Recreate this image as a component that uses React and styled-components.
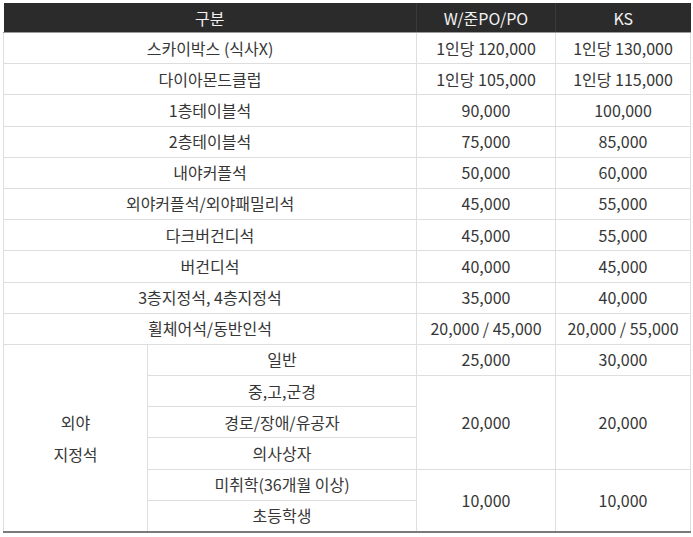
import styled, { createGlobalStyle } from 'styled-components';

const GlobalStyle = createGlobalStyle`
  body {
    margin: 0;
    background: #fff;
    font-family: "Noto Sans CJK KR", "Noto Sans", sans-serif;
  }
`;

const Wrap = styled.div`
  padding: 3px 3px 0 3px;
`;

const Table = styled.table`
  width: 687px;
  border-collapse: collapse;
  table-layout: fixed;
  border-bottom: 2px solid #7a7a7a;
  color: #363636;
  font-size: 16px;
`;

const HeadCell = styled.th`
  background: #2b2b2b;
  color: #f2f2f2;
  font-weight: 400;
  height: 29px;
  padding: 0;
  text-align: center;
  border-bottom: 1px solid #9a9a9a;
  border-left: 1px solid #3a3a3a;
  &:first-child { border-left: none; }
`;

const Cell = styled.td`
  height: 30.2px;
  padding: 0;
  text-align: center;
  vertical-align: middle;
  border: 1px solid #dedede;
  line-height: 1.2;
  white-space: nowrap;
`;

const GroupCell = styled(Cell)`
  line-height: 2;
`;

const rows = [
  ['스카이박스 (식사X)', '1인당 120,000', '1인당 130,000'],
  ['다이아몬드클럽', '1인당 105,000', '1인당 115,000'],
  ['1층테이블석', '90,000', '100,000'],
  ['2층테이블석', '75,000', '85,000'],
  ['내야커플석', '50,000', '60,000'],
  ['외야커플석/외야패밀리석', '45,000', '55,000'],
  ['다크버건디석', '45,000', '55,000'],
  ['버건디석', '40,000', '45,000'],
  ['3층지정석, 4층지정석', '35,000', '40,000'],
  ['휠체어석/동반인석', '20,000 / 45,000', '20,000 / 55,000'],
];

const App = () => {
  return (
    <>
      <GlobalStyle />
      <Wrap>
        <Table>
          <colgroup>
            <col style={{ width: '144px' }} />
            <col style={{ width: '269px' }} />
            <col style={{ width: '139px' }} />
            <col style={{ width: '135px' }} />
          </colgroup>
          <thead>
            <tr>
              <HeadCell colSpan={2}>구분</HeadCell>
              <HeadCell>W/준PO/PO</HeadCell>
              <HeadCell>KS</HeadCell>
            </tr>
          </thead>
          <tbody>
            {rows.map((r) => (
              <tr key={r[0]}>
                <Cell colSpan={2}>{r[0]}</Cell>
                <Cell>{r[1]}</Cell>
                <Cell>{r[2]}</Cell>
              </tr>
            ))}
            <tr>
              <GroupCell rowSpan={6}>외야<br />지정석</GroupCell>
              <Cell>일반</Cell>
              <Cell>25,000</Cell>
              <Cell>30,000</Cell>
            </tr>
            <tr>
              <Cell>중,고,군경</Cell>
              <Cell rowSpan={3}>20,000</Cell>
              <Cell rowSpan={3}>20,000</Cell>
            </tr>
            <tr>
              <Cell>경로/장애/유공자</Cell>
            </tr>
            <tr>
              <Cell>의사상자</Cell>
            </tr>
            <tr>
              <Cell>미취학(36개월 이상)</Cell>
              <Cell rowSpan={2}>10,000</Cell>
              <Cell rowSpan={2}>10,000</Cell>
            </tr>
            <tr>
              <Cell>초등학생</Cell>
            </tr>
          </tbody>
        </Table>
      </Wrap>
    </>
  );
};

export default App;
